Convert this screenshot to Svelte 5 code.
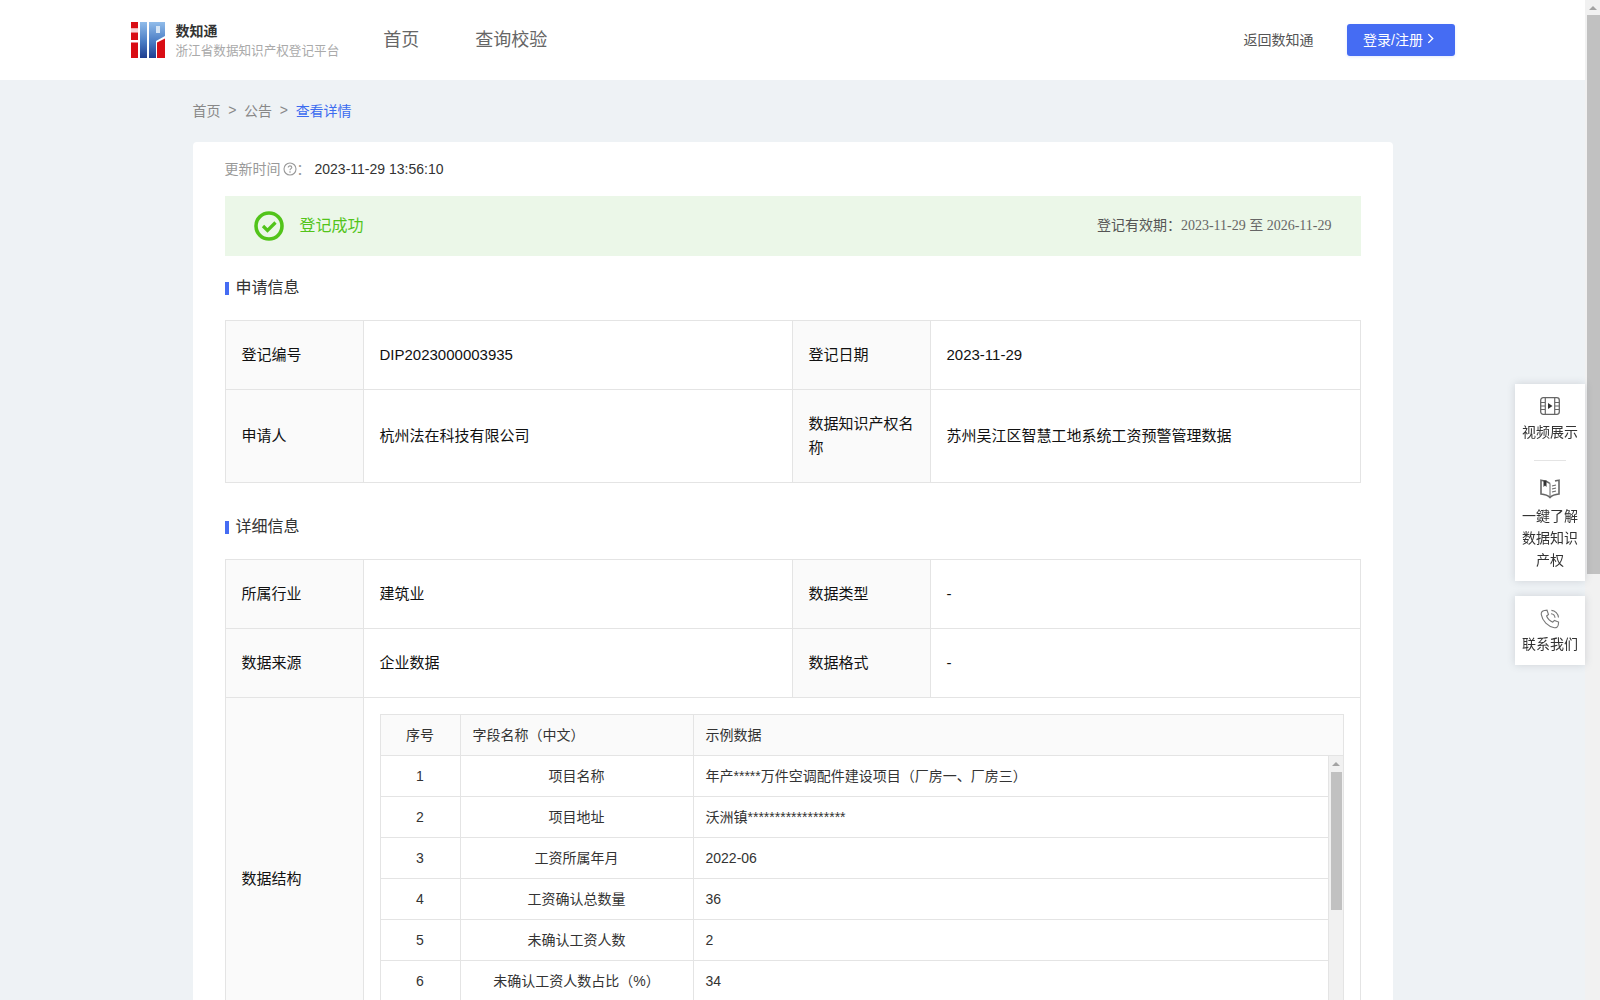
<script>
  const rows = [
    ['1', '项目名称', '年产*****万件空调配件建设项目（厂房一、厂房三）'],
    ['2', '项目地址', '沃洲镇******************'],
    ['3', '工资所属年月', '2022-06'],
    ['4', '工资确认总数量', '36'],
    ['5', '未确认工资人数', '2'],
    ['6', '未确认工资人数占比（%）', '34'],
    ['', '', '']
  ];
</script>

<div class="app">
  <div class="view">
    <header class="top">
      <div class="top-in">
        <svg class="logo" viewBox="0 0 34 36" width="34" height="36">
          <defs>
            <linearGradient id="lg" x1="0" y1="0" x2="0" y2="1">
              <stop offset="0" stop-color="#90bcea" />
              <stop offset="0.55" stop-color="#4a7cc4" />
              <stop offset="1" stop-color="#1f3e90" />
            </linearGradient>
          </defs>
          <rect x="0" y="0" width="7" height="6.5" fill="#d90d14" />
          <rect x="0" y="6.5" width="7" height="4" fill="#f8d6d8" />
          <rect x="0" y="10.5" width="7" height="7.5" fill="#d90d14" />
          <rect x="0" y="20.5" width="7" height="15.5" fill="#d90d14" />
          <rect x="9" y="0" width="7" height="36" fill="url(#lg)" />
          <path d="M18 0H34V14L25 19V36H18Z" fill="url(#lg)" />
          <rect x="25" y="4" width="4" height="7" fill="#d5e5f6" />
          <path d="M26 20.5L34 16.5V36H26Z" fill="#d90d14" />
        </svg>
        <div class="brand">
          <div class="brand-t">数知通</div>
          <div class="brand-s">浙江省数据知识产权登记平台</div>
        </div>
        <nav class="nav">
          <span>首页</span>
          <span>查询校验</span>
        </nav>
        <span class="back">返回数知通</span>
        <button class="login"><span>登录/注册</span>
          <svg viewBox="0 0 8 12" width="7" height="11"><path d="M1.5 1L6.5 6L1.5 11" fill="none" stroke="#fff" stroke-width="1.6" /></svg>
        </button>
      </div>
    </header>

    <main class="page">
      <div class="crumb">
        <span>首页</span><span class="sep">&gt;</span><span>公告</span><span class="sep">&gt;</span><span class="cur">查看详情</span>
      </div>

      <section class="card">
        <div class="time">
          <span class="time-l">更新时间</span>
          <svg viewBox="0 0 14 14" width="14" height="14" class="q">
            <circle cx="7" cy="7" r="6" fill="none" stroke="#999" stroke-width="1.1" />
            <path d="M5.2 5.6C5.2 4.5 6 3.9 7 3.9C8 3.9 8.8 4.5 8.8 5.4C8.8 6.6 7 6.7 7 8.2" fill="none" stroke="#999" stroke-width="1.1" />
            <circle cx="7" cy="10" r="0.8" fill="#999" />
          </svg>
          <span class="time-l colon">：</span>
          <span class="time-v">2023-11-29 13:56:10</span>
        </div>

        <div class="alert">
          <svg viewBox="0 0 30 30" width="30" height="30">
            <circle cx="15" cy="15" r="13" fill="none" stroke="#52c41a" stroke-width="3.6" />
            <path d="M9 15L13.5 19.5L21.5 11.5" fill="none" stroke="#52c41a" stroke-width="3.2" />
          </svg>
          <span class="ok">登记成功</span>
          <span class="valid">登记有效期：<span class="serif">2023-11-29 至 2026-11-29</span></span>
        </div>

        <h3 class="sec first">申请信息</h3>
        <table class="info">
          <colgroup><col class="c1" /><col class="c2" /><col class="c3" /><col /></colgroup>
          <tbody>
            <tr>
              <th>登记编号</th><td>DIP2023000003935</td>
              <th>登记日期</th><td>2023-11-29</td>
            </tr>
            <tr>
              <th>申请人</th><td>杭州法在科技有限公司</td>
              <th>数据知识产权名称</th><td>苏州吴江区智慧工地系统工资预警管理数据</td>
            </tr>
          </tbody>
        </table>

        <h3 class="sec second">详细信息</h3>
        <table class="info">
          <colgroup><col class="c1" /><col class="c2" /><col class="c3" /><col /></colgroup>
          <tbody>
            <tr>
              <th>所属行业</th><td>建筑业</td>
              <th>数据类型</th><td>-</td>
            </tr>
            <tr>
              <th>数据来源</th><td>企业数据</td>
              <th>数据格式</th><td>-</td>
            </tr>
            <tr>
              <th>数据结构</th>
              <td colspan="3" class="nest">
                <div class="struct">
                  <div class="s-row s-head">
                    <div class="s-c a">序号</div>
                    <div class="s-c b l">字段名称（中文）</div>
                    <div class="s-c d l">示例数据</div>
                  </div>
                  <div class="s-body">
                    <div class="s-rows">
                      {#each rows as r}
                        <div class="s-row">
                          <div class="s-c a">{r[0]}</div>
                          <div class="s-c b">{r[1]}</div>
                          <div class="s-c d l">{r[2]}</div>
                        </div>
                      {/each}
                    </div>
                    <div class="bar inner">
                      <div class="arrow"></div>
                      <div class="thumb"></div>
                    </div>
                  </div>
                </div>
              </td>
            </tr>
          </tbody>
        </table>
      </section>
    </main>

    <aside class="float">
      <div class="f-card">
        <div class="f-item">
          <svg viewBox="0 0 20 18" width="20" height="18">
            <rect x="0.7" y="0.7" width="18.6" height="16.6" rx="2.5" fill="none" stroke="#666" stroke-width="1.3" />
            <path d="M5.3 1V17M14.7 1V17M1 5.5H5M1 9H5M1 12.5H5M15 5.5H19M15 9H19M15 12.5H19" stroke="#666" stroke-width="1.2" fill="none" />
            <path d="M8 6L12.5 9L8 12Z" fill="#333" />
          </svg>
          <div class="f-t">视频展示</div>
        </div>
        <div class="f-div"></div>
        <div class="f-item">
          <svg viewBox="0 0 20 20" width="20" height="20">
            <path d="M10 4.5C8 2.8 5 1.5 1 1.2V15C5 15.4 8 16.5 10 18.5C12 16.5 15 15.4 19 15V1.2C17.5 1.3 16.3 1.6 15 2" fill="none" stroke="#666" stroke-width="1.6" />
            <path d="M10 4.5V18.5" stroke="#666" stroke-width="1" fill="none" />
            <path d="M3.5 1.5H6.5V8L5 6.6L3.5 8Z" fill="#333" />
            <path d="M12 7L16 6M12 10L16 9M12 13L16 12" stroke="#666" stroke-width="1.1" fill="none" />
          </svg>
          <div class="f-t">一鍵了解<br />数据知识<br />产权</div>
        </div>
      </div>
      <div class="f-card single">
        <div class="f-item">
          <svg viewBox="0 0 20 20" width="20" height="20">
            <path d="M4.5 1.5L7 1.2L8.5 5.5L6.6 7C7.5 9.5 10 12 12.8 13.2L14.4 11.4L18.6 13L18.3 15.8C18 18 16.2 19 14.4 18.7C7.8 17.6 2.4 12 1.3 5.6C1 3.6 2.4 1.9 4.5 1.5Z" fill="none" stroke="#777" stroke-width="1.1" />
            <path d="M11 4.8C13.2 5 14.8 6.6 15 8.8M11.4 1.4C15.2 1.6 18.2 4.6 18.5 8.5" fill="none" stroke="#777" stroke-width="1.1" />
          </svg>
          <div class="f-t">联系我们</div>
        </div>
      </div>
    </aside>
  </div>
  <div class="bar outer">
    <div class="arrow"></div>
    <div class="thumb"></div>
  </div>
</div>

<style>
  :global(body) {
    margin: 0;
    background: #eef2f5;
    font-family: "Liberation Sans", "Noto Sans CJK SC", sans-serif;
    font-size: 14px;
    color: #333;
  }
  .app {
    display: flex;
    height: 100vh;
    overflow: hidden;
  }
  .view {
    flex: 1;
    min-width: 0;
    overflow: hidden;
  }
  .bar {
    flex: none;
    background: #f1f1f1;
  }
  .outer {
    width: 15px;
  }
  .outer .thumb {
    height: 559px;
    margin-left: 2px;
    background: #c1c1c1;
  }
  .arrow {
    height: 15px;
    display: flex;
    align-items: center;
    justify-content: center;
  }
  .arrow::before {
    content: "";
    width: 0;
    height: 0;
    border-left: 4px solid transparent;
    border-right: 4px solid transparent;
    border-bottom: 4px solid #a3a3a3;
  }
  .inner {
    width: 14px;
  }
  .inner .arrow {
    height: 16px;
  }
  .inner .thumb {
    width: 11px;
    height: 138px;
    margin-left: 2px;
    background: #c1c1c1;
  }
  .top {
    height: 80px;
    background: #fff;
  }
  .top-in {
    width: 1324px;
    height: 80px;
    margin: 0 auto;
    display: flex;
    align-items: center;
  }
  .logo {
    margin-right: 11px;
    flex: none;
  }
  .brand {
    margin-top: 1px;
  }
  .brand-t {
    font-size: 14px;
    font-weight: 700;
    line-height: 20px;
    color: #333;
  }
  .brand-s {
    margin-top: 1px;
    font-size: 12.6px;
    line-height: 18px;
    color: #aaa;
  }
  .nav {
    display: flex;
    gap: 56px;
    margin-left: 44px;
    margin-top: -5px;
    font-size: 18px;
    color: #666;
    flex: 1;
  }
  .back {
    color: #555;
    margin-right: 33px;
    margin-top: -3px;
  }
  .login {
    width: 108px;
    height: 32px;
    padding: 0 4px 3px 0;
    border: 0;
    border-radius: 3px;
    background: #456cf3;
    color: #fff;
    font: inherit;
    display: flex;
    align-items: center;
    justify-content: center;
    gap: 4px;
    box-shadow: 0 1px 3px rgba(69, 108, 243, 0.15);
  }
  .page {
    width: 1200px;
    margin: 0 auto;
  }
  .crumb {
    height: 62px;
    display: flex;
    align-items: center;
    gap: 7.7px;
    color: #888;
    padding-bottom: 3px;
    box-sizing: border-box;
  }
  .crumb .cur {
    color: #3c6cf0;
  }
  .card {
    background: #fff;
    border-radius: 4px;
    padding: 16px 32px 40px;
  }
  .time {
    height: 22px;
    display: flex;
    align-items: center;
    margin-bottom: 16px;
  }
  .time-l {
    color: #999;
    margin-top: -2px;
  }
  .q {
    margin-left: 2px;
  }
  .colon {
    width: 18px;
  }
  .time-v {
    color: #333;
  }
  .alert {
    height: 60px;
    background: #ebf7e8;
    display: flex;
    align-items: center;
    padding: 0 29px 0 29px;
  }
  .ok {
    margin-left: 16px;
    margin-top: -5px;
    font-size: 16px;
    color: #52c41a;
    flex: 1;
  }
  .valid {
    color: #555;
    margin-top: -5px;
  }
  .serif {
    font-family: "Liberation Serif", "Noto Sans CJK SC", serif;
    color: #666;
  }
  .sec {
    margin: 0;
    height: 24px;
    line-height: 26px;
    font-size: 16px;
    font-weight: 400;
    color: #333;
    display: flex;
    align-items: flex-start;
    gap: 7px;
  }
  .sec::before {
    content: "";
    width: 4px;
    height: 13px;
    background: #456cf3;
    margin-top: 7px;
  }
  .sec.first {
    margin: 19px 0 21px;
  }
  .sec.second {
    margin: 31px 0 21px;
  }
  .info {
    width: 100%;
    table-layout: fixed;
    border-collapse: collapse;
    font-size: 15px;
    line-height: 24px;
    color: #111;
  }
  .c1 {
    width: 138px;
  }
  .c2 {
    width: 429px;
  }
  .c3 {
    width: 138px;
  }
  .info th,
  .info td {
    border: 1px solid #e4e4e4;
    padding: 22px 16px;
    text-align: left;
    font-weight: 400;
  }
  .info th {
    background: #fafafa;
    padding-right: 14px;
  }
  .info td.nest {
    padding: 16px;
  }
  .struct {
    font-size: 14px;
    color: #333;
    line-height: 20px;
    border: 1px solid #e4e4e4;
    border-bottom: 0;
  }
  .s-row {
    display: grid;
    grid-template-columns: 80px 233px 1fr;
    height: 40px;
    border-bottom: 1px solid #e4e4e4;
  }
  .s-head {
    background: #fafafa;
  }
  .s-c {
    display: flex;
    align-items: center;
    justify-content: center;
    border-right: 1px solid #e4e4e4;
  }
  .s-c.l {
    justify-content: flex-start;
    padding-left: 12px;
  }
  .s-head .d {
    border-right: 0;
  }
  .s-body {
    display: flex;
    height: 287px;
  }
  .s-rows {
    flex: 1;
    min-width: 0;
  }
  .float {
    position: fixed;
    right: 15px;
    top: 384px;
    width: 70px;
    display: flex;
    flex-direction: column;
    gap: 15px;
  }
  .f-card {
    background: #fff;
    box-shadow: 0 0 8px rgba(60, 70, 90, 0.18);
    padding: 13px 0 10px;
  }
  .f-item {
    display: flex;
    flex-direction: column;
    align-items: center;
  }
  .f-t {
    margin-top: 6px;
    text-align: center;
    line-height: 22px;
    color: #333;
    width: 70px;
  }
  .f-div {
    width: 32px;
    height: 1px;
    background: #e4e4e4;
    margin: 17px auto 18px;
  }
  .single {
    padding: 13px 0 10px;
  }
  .single .f-t {
    margin-top: 4px;
  }
</style>
